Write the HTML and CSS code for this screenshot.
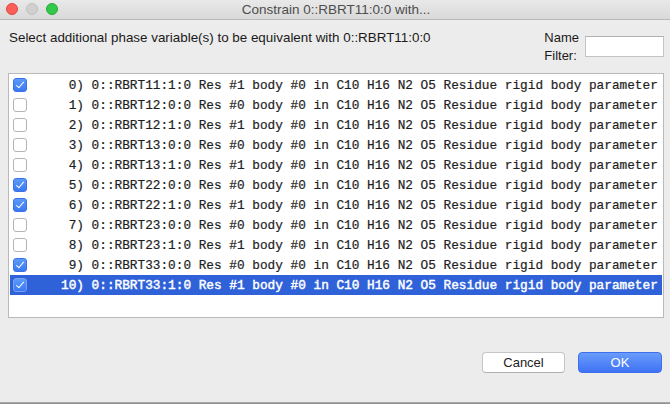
FILE: index.html
```html
<!DOCTYPE html>
<html>
<head>
<meta charset="utf-8">
<link rel="stylesheet" href="styles.css">
</head>
<body>
<div class="window">
  <div class="titlebar">
    <div class="lights">
      <span class="light red"></span>
      <span class="light gray"></span>
      <span class="light green"></span>
    </div>
    <div class="title">Constrain 0::RBRT11:0:0 with...</div>
  </div>
  <div class="header">
    <div class="prompt">Select additional phase variable(s) to be equivalent with 0::RBRT11:0:0</div>
    <div class="filter">
      <div class="filter-label">Name<br>Filter:</div>
      <div class="filter-input"></div>
    </div>
  </div>
  <div class="list">
    <div class="row"><span class="cb on"></span><span class="txt"> 0) 0::RBRT11:1:0 Res #1 body #0 in C10 H16 N2 O5 Residue rigid body parameter</span></div>
    <div class="row"><span class="cb"></span><span class="txt"> 1) 0::RBRT12:0:0 Res #0 body #0 in C10 H16 N2 O5 Residue rigid body parameter</span></div>
    <div class="row"><span class="cb"></span><span class="txt"> 2) 0::RBRT12:1:0 Res #1 body #0 in C10 H16 N2 O5 Residue rigid body parameter</span></div>
    <div class="row"><span class="cb"></span><span class="txt"> 3) 0::RBRT13:0:0 Res #0 body #0 in C10 H16 N2 O5 Residue rigid body parameter</span></div>
    <div class="row"><span class="cb"></span><span class="txt"> 4) 0::RBRT13:1:0 Res #1 body #0 in C10 H16 N2 O5 Residue rigid body parameter</span></div>
    <div class="row"><span class="cb on"></span><span class="txt"> 5) 0::RBRT22:0:0 Res #0 body #0 in C10 H16 N2 O5 Residue rigid body parameter</span></div>
    <div class="row"><span class="cb on"></span><span class="txt"> 6) 0::RBRT22:1:0 Res #1 body #0 in C10 H16 N2 O5 Residue rigid body parameter</span></div>
    <div class="row"><span class="cb"></span><span class="txt"> 7) 0::RBRT23:0:0 Res #0 body #0 in C10 H16 N2 O5 Residue rigid body parameter</span></div>
    <div class="row"><span class="cb"></span><span class="txt"> 8) 0::RBRT23:1:0 Res #1 body #0 in C10 H16 N2 O5 Residue rigid body parameter</span></div>
    <div class="row"><span class="cb on"></span><span class="txt"> 9) 0::RBRT33:0:0 Res #0 body #0 in C10 H16 N2 O5 Residue rigid body parameter</span></div>
    <div class="row selected"><span class="cb on"></span><span class="txt">10) 0::RBRT33:1:0 Res #1 body #0 in C10 H16 N2 O5 Residue rigid body parameter</span></div>
  </div>
  <div class="buttons">
    <button class="btn cancel">Cancel</button>
    <button class="btn ok">OK</button>
  </div>
  <div class="bottom-edge"></div>
</div>
</body>
</html>
```

FILE: styles.css
```css
html, body {
  margin: 0;
  padding: 0;
}
body {
  width: 670px;
  height: 404px;
  overflow: hidden;
  background: #ececec;
  font-family: "Liberation Sans", Arial, sans-serif;
}
.window {
  display: flex;
  flex-direction: column;
  height: 404px;
  background: #ececec;
}
.titlebar {
  position: relative;
  height: 19px;
  flex: none;
  background: linear-gradient(#e9e9e9, #d9d9d9);
  border-bottom: 1px solid #b9b9b9;
  display: flex;
  align-items: center;
  justify-content: center;
}
.lights {
  position: absolute;
  left: 6px;
  top: 3px;
  display: flex;
  gap: 8px;
}
.light {
  width: 12px;
  height: 12px;
  border-radius: 50%;
  box-sizing: border-box;
}
.red { background: #fc5f57; border: 1px solid #e0443e; }
.gray { background: #d0d0d0; border: 1px solid #c0c0c0; }
.green { background: #34c84a; border: 1px solid #27aa35; }
.title {
  font-size: 13.5px;
  color: #4d4d4d;
  margin-left: 2px;
}
.header {
  height: 53px;
  flex: none;
  display: flex;
  justify-content: space-between;
  padding: 0 6px 0 9px;
}
.prompt {
  font-size: 13.4px;
  color: #1a1a1a;
  margin-top: 10px;
}
.filter {
  display: flex;
  align-items: flex-start;
  gap: 6px;
  margin-top: 9px;
}
.filter-label {
  font-size: 13px;
  line-height: 18px;
  color: #1a1a1a;
}
.filter-input {
  width: 77px;
  height: 19px;
  margin-top: 7px;
  background: #fff;
  border: 1px solid #c4c4c4;
  border-top-color: #b0b0b0;
}
.list {
  flex: none;
  height: 245px;
  box-sizing: border-box;
  margin: 0 6px 0 8px;
  background: #fff;
  border: 1px solid #b9b9b9;
  padding: 1px;
}
.row {
  height: 20px;
  display: flex;
  align-items: center;
  color: #1e1e1e;
}
.row.selected {
  background: #2f62d9;
  color: #fff;
}
.cb {
  flex: none;
  width: 14px;
  height: 14px;
  box-sizing: border-box;
  margin-left: 3px;
  border-radius: 3px;
  background: #fff;
  border: 1px solid #b4b4b4;
  position: relative;
}
.cb.on {
  background: linear-gradient(#5c9bfb, #3a78f3);
  border: 1px solid #3a72e6;
}
.selected .cb.on {
  border-color: #7aa0ef;
}
.cb.on::after {
  content: "";
  position: absolute;
  left: 4px;
  top: 1px;
  width: 3px;
  height: 7px;
  border-right: 1.5px solid #fff;
  border-bottom: 1.5px solid #fff;
  transform: rotate(40deg);
}
.txt {
  font-family: "Liberation Mono", "Courier New", monospace;
  font-size: 12.75px;
  white-space: pre;
  margin-left: 34px;
  -webkit-text-stroke: 0.2px #1e1e1e;
}
.selected .txt {
  -webkit-text-stroke: 0.45px #fff;
}
.buttons {
  flex: none;
  display: flex;
  justify-content: flex-end;
  gap: 13px;
  padding-right: 8px;
  margin-top: 34px;
}
.btn {
  height: 21px;
  font-family: "Liberation Sans", Arial, sans-serif;
  font-size: 13px;
  border-radius: 4px;
  padding: 0;
}
.cancel {
  width: 83px;
  background: #fff;
  color: #222;
  border: 1px solid #c5c5c5;
  border-bottom-color: #b0b0b0;
}
.ok {
  width: 84px;
  background: linear-gradient(#6a9cfb, #3e73f5);
  color: #fff;
  border: 1px solid #3e6ff0;
}
.bottom-edge {
  margin-top: auto;
  height: 2px;
  background: linear-gradient(#b0b0b0, #888);
}
```
